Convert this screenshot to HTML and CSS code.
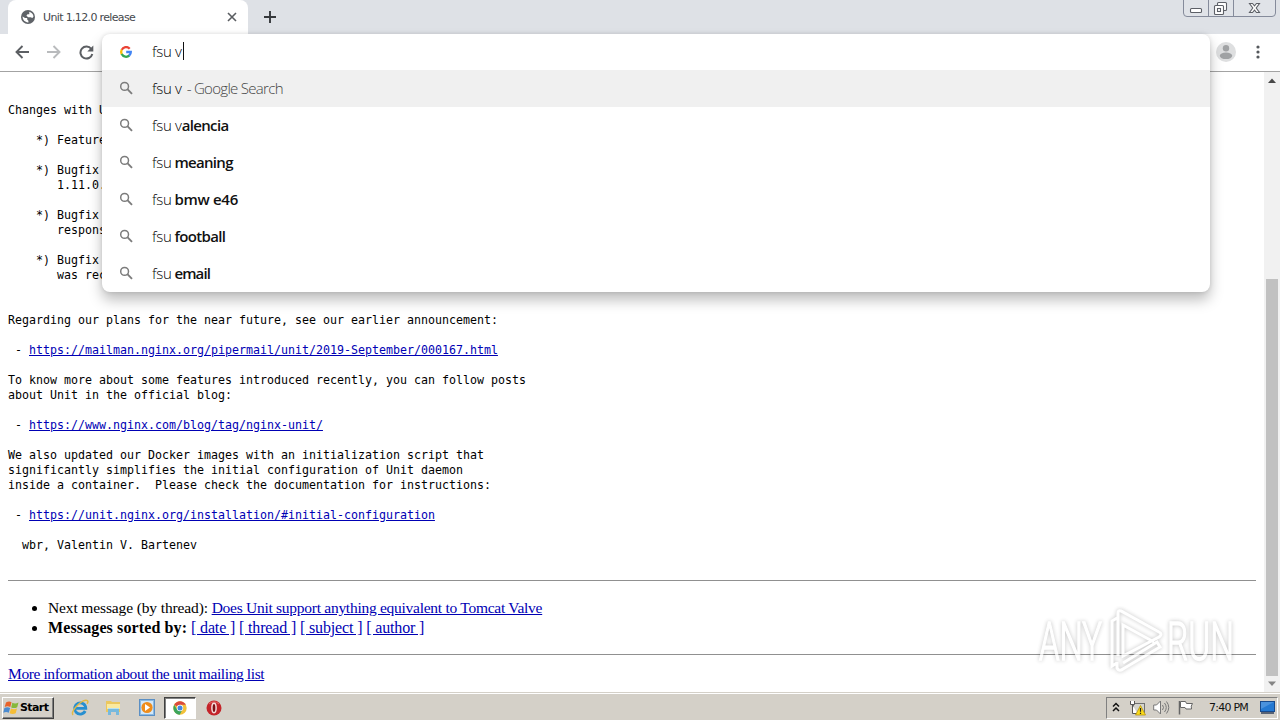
FILE: index.html
```html
<!DOCTYPE html>
<html lang="en">
<head>
<meta charset="utf-8">
<title>Unit 1.12.0 release</title>
<link rel="stylesheet" href="styles.css">
</head>
<body>
<svg width="0" height="0" class="defs">
  <symbol id="search" viewBox="0 0 14 14"><circle cx="5.600" cy="5.400" r="3.900" fill="none" stroke="#7c7c7c" stroke-width="1.500"/><path d="M8.400 8.200l4.600 4.600" stroke="#7c7c7c" stroke-width="1.900"/></symbol>
</svg>
<div class="screen">
  <header class="tabs">
    <div class="tab">
      <svg class="globe" width="14" height="14" viewBox="0 0 14 14"><circle cx="7" cy="7" r="7" fill="#5f6368"/><path d="M1.600 6.600L4 8.100h2.200v1.500l1.200 1.100v1.700C4.200 12.600 1.500 10 1.600 6.600zM8.300 1.700c2.300.6 3.900 2.400 4.200 4.800L11.400 8 9.600 7.200H7.200L5.400 5.700 6.500 4.200h1.800z" fill="#fff"/></svg>
      <span class="tab-title">Unit 1.12.0 release</span>
      <svg class="close" width="10" height="10" viewBox="0 0 10 10"><path d="M1 1l8 8M9 1L1 9" stroke="#5a5d61" stroke-width="1.600"/></svg>
    </div>
    <svg class="plus" width="12" height="12" viewBox="0 0 12 12"><path d="M6 0v12M0 6h12" stroke="#35383c" stroke-width="1.900"/></svg>
    <svg class="winbtns" width="94" height="18" viewBox="0 0 94 18"><path d="M.5 0v13q0 3.500 3.500 3.500h85q3.500 0 3.500-3.500V0M25.500 0v16M50.500 0v16" fill="#e0e3e8" stroke="#858b9b"/><g fill="#fff" stroke="#5d6067" stroke-width="1.100"><rect x="7.500" y="8.500" width="11" height="4" rx="1"/><rect x="34.500" y="2.500" width="9" height="8" rx="1"/><rect x="31.500" y="5.500" width="9" height="9" rx="1"/><rect x="34.500" y="8.500" width="3" height="3"/><path d="M66.500 3.500h3l2 2.300 2-2.300h3l-3.300 4.500 3.300 4.500h-3l-2-2.300-2 2.300h-3L69.800 8z"/></g></svg>
  </header>
  <div class="toolbar">
    <svg width="14" height="14" viewBox="0 0 14 14" class="back"><path d="M14 7H1.500M7.500 1L1.500 7l6 6" fill="none" stroke="#5c5f63" stroke-width="1.900"/></svg>
    <svg width="14" height="14" viewBox="0 0 14 14" class="forward"><path d="M0 7h12.500M6.500 1l6 6-6 6" fill="none" stroke="#b9bbbd" stroke-width="1.900"/></svg>
    <svg width="15" height="15" viewBox="0 0 15 15" class="reload"><path d="M12.300 4A6 6 0 1 0 13.300 9" fill="none" stroke="#5c5f63" stroke-width="2"/><path d="M14.300 .5v6h-6z" fill="#5c5f63"/></svg>
    <svg width="20" height="20" viewBox="0 0 20 20" class="avatar"><circle cx="10" cy="10" r="10" fill="#dedfe0"/><circle cx="10" cy="6.200" r="3.200" fill="#a0a2a4"/><ellipse cx="10" cy="13.800" rx="6.200" ry="3.300" fill="#a0a2a4"/></svg>
    <svg width="4" height="14" viewBox="0 0 4 14" class="dots"><g fill="#55585c"><circle cx="2" cy="2" r="1.600"/><circle cx="2" cy="7" r="1.600"/><circle cx="2" cy="12" r="1.600"/></g></svg>
  </div>
  <div class="viewport">
    <main class="page">
<pre class="changes">Changes with U

    *) Feature

    *) Bugfix
       1.11.0.

    *) Bugfix
       respons

    *) Bugfix
       was rec</pre>
<pre class="letter">Regarding our plans for the near future, see our earlier announcement:

 - <a>https://mailman.nginx.org/pipermail/unit/2019-September/000167.html</a>

To know more about some features introduced recently, you can follow posts
about Unit in the official blog:

 - <a>https://www.nginx.com/blog/tag/nginx-unit/</a>

We also updated our Docker images with an initialization script that
significantly simplifies the initial configuration of Unit daemon
inside a container.  Please check the documentation for instructions:

 - <a>https://unit.nginx.org/installation/#initial-configuration</a>

  wbr, Valentin V. Bartenev</pre>
      <hr>
      <ul>
        <li class="next">Next message (by thread): <a>Does Unit support anything equivalent to Tomcat Valve</a></li>
        <li class="sorted"><b>Messages sorted by:</b> <a>[ date ]</a> <a>[ thread ]</a> <a>[ subject ]</a> <a>[ author ]</a></li>
      </ul>
      <hr>
      <a class="more">More information about the unit mailing list</a>
    </main>
    <div class="scrollbar">
      <svg width="16" height="16" viewBox="0 0 16 16"><path d="M4 11l4-4.500 4 4.500z" fill="#484848"/></svg>
      <div class="thumb"></div>
      <svg width="16" height="16" viewBox="0 0 16 16"><path d="M4 5.500h8L8 10z" fill="#858585"/></svg>
    </div>
  </div>
  <footer class="taskbar">
    <div class="start"><svg width="17" height="16" viewBox="0 0 17 16"><path d="M3 2.500q3-2 5.500-.3L7.300 7Q4.600 5.400 1.700 7z" fill="#e8632b"/><path d="M9.300 2.700q3 1.500 6.200-.3l-1.300 4.800q-3 1.600-6 .2z" fill="#86b83c"/><path d="M1.400 8q3-1.600 5.700 0L5.800 12.800q-2.600-1.600-5.500 0z" fill="#4b8bd0"/><path d="M8 8.400q3 1.500 6 0l-1.300 4.800q-3 1.600-6.100.1z" fill="#f5bd36"/></svg><span>Start</span></div>
    <svg class="t-ie" width="18" height="18" viewBox="0 0 18 18"><path d="M14.200 12A5.600 5.600 0 1 1 14.800 9.300H5" fill="none" stroke="#278fd0" stroke-width="2.800"/><path d="M2 16C-1 12 13-2 16.500 1.800q1 1-.5 3" fill="none" stroke="#e2b944" stroke-width="1.500"/></svg>
    <svg class="t-folder" width="17" height="17" viewBox="0 0 17 17"><path d="M1 4V2h5l1 1h8v10H1z" fill="#ebc75f"/><path d="M2 5h13v5H2z" fill="#fae99f"/><path d="M3 16V9.500h11V16h-3v-3H6v3z" fill="#77b9dd"/><path d="M3 9.500h11" stroke="#b8e2f4"/></svg>
    <svg class="t-media" width="16" height="17" viewBox="0 0 16 17"><rect x=".5" y=".5" width="15" height="16" fill="#8abae3" stroke="#5b8fc4"/><rect x="2" y="2" width="12" height="13" fill="#d4e8f8"/><circle cx="8" cy="8.500" r="5.600" fill="#ef8d1b"/><path d="M6 5l5 3.500L6 12z" fill="#fff"/></svg>
    <div class="active"><svg width="14" height="14" viewBox="0 0 14 14"><circle cx="7" cy="7" r="6.700" fill="#f2c13b"/><path d="M7 7L1.200 3.700A6.700 6.700 0 0 1 12.800 3.700H7z" fill="#db493e"/><path d="M1.200 3.700A6.700 6.700 0 0 0 6.700 13.700L9.500 8.500H4z" fill="#3ca55c"/><circle cx="7" cy="7" r="3.200" fill="#fff"/><circle cx="7" cy="7" r="2.500" fill="#4387e0"/></svg></div>
    <svg class="t-opera" width="16" height="16" viewBox="0 0 16 16"><circle cx="8" cy="8" r="7.500" fill="#c4242a"/><path d="M3 4a6.500 6 0 0 1 10 0" stroke="#e66b68" fill="none"/><ellipse cx="8" cy="8" rx="2.100" ry="4.700" fill="#7c1115" stroke="#f4dddd" stroke-width="1.500"/></svg>
    <div class="tray">
      <svg width="8" height="11" viewBox="0 0 8 11"><path d="M1 4.500L4 1.500l3 3M1 9l3-3 3 3" fill="none" stroke="#111" stroke-width="1.500"/></svg>
      <svg class="net" width="17" height="16" viewBox="0 0 17 16"><rect x="4.500" y="3.500" width="11" height="9" fill="#d4d4cd" stroke="#707070"/><path d="M1.500 1v3.500h4V1M3.500 5v8.500h5" fill="#fff" stroke="#555"/><path d="M11.500 5.500l5 9.500h-10z" fill="#fbdb18" stroke="#b69313" stroke-width=".8"/><path d="M11.500 8v3.800M11.500 12.800v1.200" stroke="#222" stroke-width="1.200"/></svg>
      <svg class="vol" width="17" height="15" viewBox="0 0 17 15"><path d="M.7 5v5h2.800l4 4V1l-4 4z" fill="#fff" stroke="#777"/><path d="M9.500 5q2 2.500 0 5M11.500 3q3.500 4.500 0 9M13.500 1.500q4.500 6 0 12" fill="none" stroke="#777"/></svg>
      <svg class="flag" width="16" height="15" viewBox="0 0 16 15"><path d="M1.500 1v13.500" stroke="#666" stroke-width="1.500"/><path d="M2.500 1.500h5l1 2h6q-2 2.500-1 5.500H8l-1-1.500H2.500z" fill="#fff" stroke="#666"/></svg>
      <span class="clock">7:40 PM</span>
      <svg class="desk" width="15" height="13" viewBox="0 0 15 13"><rect x=".5" y=".5" width="14" height="10" fill="#2479d2" stroke="#174a8d"/><path d="M1 1h13L1 8z" fill="#4a92dd"/><path d="M1 12h13" stroke="#303f59" stroke-width="1.500"/></svg>
    </div>
  </footer>
  <section class="omnibox">
    <div class="row input">
      <svg width="12" height="12" viewBox="0 0 12 12"><g fill="none" stroke-width="2.300"><path d="M9.700 2.700A4.800 4.800 0 0 0 1.700 3.900" stroke="#ea4335"/><path d="M1.700 3.800a4.800 4.800 0 0 0 0 4.400" stroke="#fbbc05"/><path d="M1.700 8.100a4.800 4.800 0 0 0 7.700 1.300" stroke="#34a853"/><path d="M9.200 9.600A4.700 4.700 0 0 0 10.800 6H6.200" stroke="#4285f4"/></g></svg>
      <span class="q">fsu v</span><i class="caret"></i>
    </div>
    <div class="row selected"><svg width="14" height="14"><use href="#search"/></svg><span class="q">fsu v</span><span class="hint">- Google Search</span></div>
    <div class="row"><svg width="14" height="14"><use href="#search"/></svg><span class="q">fsu v</span><b>alencia</b></div>
    <div class="row"><svg width="14" height="14"><use href="#search"/></svg><span class="q">fsu</span><b class="word meaning">meaning</b></div>
    <div class="row"><svg width="14" height="14"><use href="#search"/></svg><span class="q">fsu</span><b class="word bmw">bmw e46</b></div>
    <div class="row"><svg width="14" height="14"><use href="#search"/></svg><span class="q">fsu</span><b class="word">football</b></div>
    <div class="row"><svg width="14" height="14"><use href="#search"/></svg><span class="q">fsu</span><b class="word email">email</b></div>
  </section>
  <svg class="watermark" width="240" height="72" viewBox="0 0 240 72">
    <g class="mark"><text x="5" y="54" textLength="63" lengthAdjust="spacingAndGlyphs">ANY</text><text x="133" y="54" textLength="67" lengthAdjust="spacingAndGlyphs">RUN</text>
    <path d="M84 50V7q0-3 3-2l38 21q4 2 0 5L89 50V19l31 17M83 12l-5 3v45l5-3M83 56v6q2 4 6 1l37-22-3-5-34 21" fill="none" stroke="#fff" stroke-width="3"/></g>
  </svg>
</div>
</body>
</html>
```
FILE: styles.css
```css
* { box-sizing: border-box; }
body { margin: 0; }
svg { display: block; flex: none; }
.defs { position: absolute; }
.screen { position: relative; width: 1280px; height: 720px; overflow: hidden; display: flex; flex-direction: column; background: #fff; }

.tabs { height: 34px; background: #dee1e6; display: flex; padding-left: 8px; flex: none; }
.tab { width: 240px; height: 34px; background: #fff; border-radius: 8px 8px 0 0; display: flex; align-items: center; padding: 0 11px 0 13px; }
.tab-title { font: 11px/16px "DejaVu Sans", sans-serif; color: #45494d; margin: 1px 0 0 8px; flex: 1; letter-spacing: -0.65px; white-space: nowrap; }
.plus { margin: 11px 0 0 16px; }
.winbtns { margin-left: auto; margin-right: 3px; }

.toolbar { height: 38px; flex: none; border-bottom: 1px solid #a3a3a3; display: flex; align-items: center; padding: 0 20px 1px 15px; }
.forward { margin-left: 18px; }
.reload { margin-left: 18px; }
.avatar { margin-left: auto; }
.dots { margin-left: 20px; }

.viewport { height: 620px; flex: none; display: flex; }
.page { flex: 1; padding: 31px 8px 0; font: 16px/20px "Liberation Serif", serif; color: #000; }
.page pre { margin: 0; font: 11.63px/15px "DejaVu Sans Mono", monospace; }
.changes { width: 110px; height: 210px; }
.letter { height: 267px; }
.page a { color: #0000b4; text-decoration: underline; }
.page hr { margin: 0; border: 0; height: 1px; background: #909090; }
.page ul { margin: 0; padding: 17px 0 16px 40px; }
.next { font-size: 15.5px; letter-spacing: -0.13px; }
.next a { letter-spacing: -0.27px; }
.sorted { letter-spacing: -0.15px; }
.sorted b { letter-spacing: 0.12px; }
.page .more { display: block; margin-top: 9px; font-size: 15.5px; letter-spacing: -0.4px; width: max-content; }
.scrollbar { width: 16px; background: #f1f1f1; display: flex; flex-direction: column; }
.thumb { margin: 191px 2px 0; height: 397px; background: #c1c1c1; }

.taskbar { height: 28px; flex: none; background: #d4d0c8; border-top: 1px solid #d4d0c8; box-shadow: inset 0 1px #fff; display: flex; align-items: center; padding: 2px 2px 0; }
.start { width: 52px; height: 22px; display: flex; align-items: center; border: 1px solid; border-color: #fff #404040 #404040 #fff; box-shadow: inset -1px -1px #808080; font: bold 11px/14px "DejaVu Sans", sans-serif; letter-spacing: -0.6px; color: #000; }
.t-ie { margin-left: 17px; }
.t-folder { margin-left: 16px; }
.t-media { margin-left: 17px; }
.active { width: 32px; height: 22px; margin-left: 9px; display: flex; align-items: center; justify-content: center; background: #fff; border: 1px solid; border-color: #404040 #fff #fff #404040; box-shadow: inset 1px 1px #808080; }
.t-opera { margin-left: 10px; }
.tray { margin-left: auto; width: 172px; height: 22px; border: 1px solid; border-color: #808080 #fff #fff #808080; display: flex; align-items: center; padding-left: 5px; }
.net { margin-left: 9px; }
.vol { margin-left: 7px; }
.flag { margin-left: 8px; }
.clock { font: 11px/14px "DejaVu Sans", sans-serif; letter-spacing: -0.75px; margin-left: 15px; width: 41px; white-space: nowrap; color: #111; }
.desk { margin-left: 10px; }

.omnibox { position: absolute; left: 102px; top: 34px; width: 1108px; height: 258px; background: #fff; border-radius: 8px; overflow: hidden; }
.omnibox { box-shadow: 0 8px 14px rgba(0,0,0,.26), 0 0 4px rgba(0,0,0,.12); }
.row { height: 37px; display: flex; align-items: center; padding: 0 0 2px 17px; font: 15px/20px "Open Sans", sans-serif; color: #111; white-space: pre; }
.row svg { width: 14px; }
.row.input { height: 36px; }
.row.input svg { margin-top: 1px; }
.selected { background: #f0f0f0; }
.q { margin-left: 19px; font-weight: 300; letter-spacing: -0.3px; color: #000; }
.hint { margin-left: 5px; font-weight: 300; letter-spacing: -0.7px; color: #444; }
.row b { font-weight: 600; letter-spacing: -0.65px; }
.row .word { margin-left: 3px; }
.row .meaning { letter-spacing: -0.7px; }
.row .bmw { letter-spacing: -0.3px; }
.row .email { letter-spacing: -0.9px; }
.caret { width: 1px; height: 18px; margin-left: 1px; background: #111; }

.watermark { position: absolute; left: 1034px; top: 606px; }
.mark { filter: drop-shadow(0 0 2px rgba(0,0,0,.32)); opacity: .75; }
.mark text { font: 300 53px "Roboto", sans-serif; fill: #fff; stroke: #fff; stroke-width: 1.5; }
```
